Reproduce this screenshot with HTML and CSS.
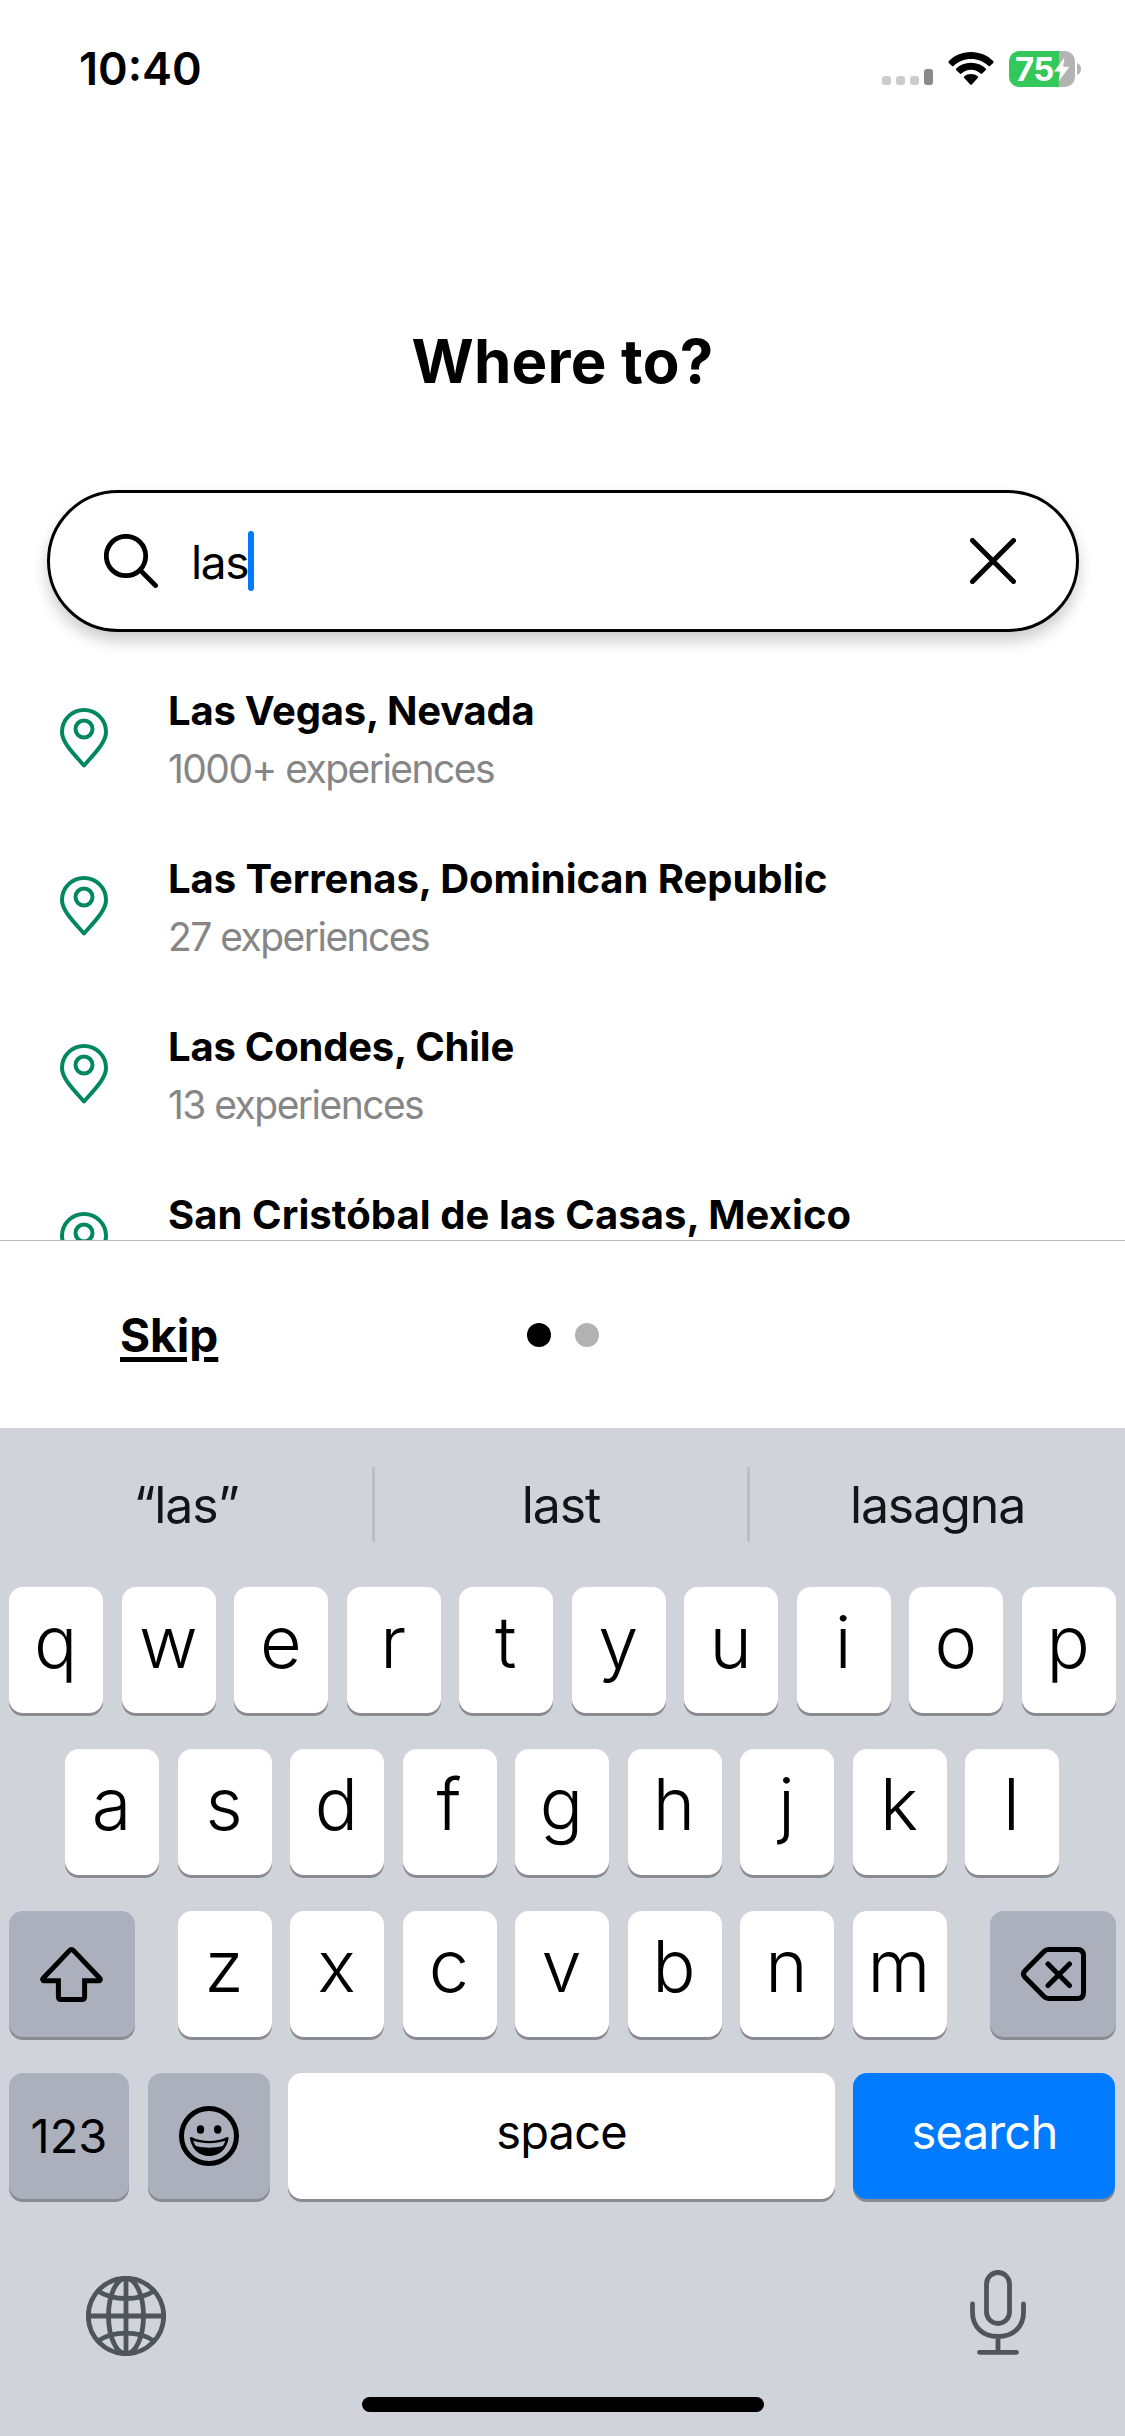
FILE: index.html
```html
<!DOCTYPE html>
<html lang="en">
<head>
<meta charset="utf-8">
<title>Where to?</title>
<link rel="stylesheet" href="styles.css">
</head>
<body>
<svg class="sprite" aria-hidden="true">
  <symbol id="pin" viewBox="0 0 48 60">
    <path d="M24 57.500C15 47 2 35 2 24a22 22 0 0 1 44 0C46 35 33 47 24 57.500Z" fill="none" stroke="currentColor" stroke-width="4" stroke-linejoin="round"/>
    <circle cx="24" cy="21" r="8.500" fill="none" stroke="currentColor" stroke-width="4"/>
  </symbol>
</svg>
<div class="screen">
  <header class="status">
    <span class="clock">10:40</span>
    <div class="indicators">
      <div class="signal"><i></i><i></i><i></i><i class="tall"></i></div>
      <svg class="wifi" viewBox="0 0 46 33"><path d="M23 0C32 0 40 3.600 45.200 9.100Q46 10 45.200 10.900L42 14Q41.200 14.700 40.300 13.800C35.600 9.500 29.700 7 23 7S10.400 9.500 5.700 13.800Q4.800 14.700 4 14L.8 10.900Q0 10 .8 9.100C6 3.600 14 0 23 0Z"/><path d="M23 10.800c6 0 11 2.300 14.700 5.600q.9.900.1 1.700l-3.600 3.500q-.8.700-1.700 0C29.900 19.100 26.700 17.800 23 17.800s-6.900 1.300-9.500 3.800q-.9.700-1.700 0l-3.600-3.500q-.8-.8.100-1.700C12 13.100 17 10.800 23 10.800Z"/><path d="M23 22c2.600 0 4.800.9 6.600 2.300q.9.800.1 1.700L23.800 32.500q-.8.700-1.600 0L16.300 26q-.8-.9.100-1.700C18.200 22.900 20.400 22 23 22Z"/></svg>
      <div class="battery">
        <div class="cell"><span class="level">75</span><svg class="bolt" viewBox="0 0 16 25"><path d="M10.500.500 0 14.500h6.500L4.500 24.500 15.500 9.800H9Z"/></svg></div>
        <svg class="nub" viewBox="0 0 5 12"><path d="M0 0a6.500 6.500 0 0 1 0 12Z"/></svg>
      </div>
    </div>
  </header>
  <main class="content">
    <h1 class="title">Where to?</h1>
    <div class="search">
      <svg class="glass" viewBox="0 0 54 54"><circle cx="22" cy="22" r="19.700"/><path d="M36 36 51.500 51.500"/></svg>
      <span class="query">las</span><i class="caret"></i>
      <svg class="clear" viewBox="0 0 46 46"><path d="M2.500 2.500l41 41M43.500 2.500l-41 41"/></svg>
    </div>
    <ul class="results">
      <li class="result"><svg class="pin"><use href="#pin"/></svg><div class="info"><b class="tight">Las Vegas, Nevada</b><small>1000+ experiences</small></div></li>
      <li class="result"><svg class="pin"><use href="#pin"/></svg><div class="info"><b>Las Terrenas, Dominican Republic</b><small>27 experiences</small></div></li>
      <li class="result"><svg class="pin"><use href="#pin"/></svg><div class="info"><b class="tight">Las Condes, Chile</b><small>13 experiences</small></div></li>
      <li class="result"><svg class="pin"><use href="#pin"/></svg><div class="info"><b class="loose">San Cristóbal de las Casas, Mexico</b></div></li>
    </ul>
  </main>
  <footer class="footer">
    <a class="skip">Skip</a>
    <div class="dots"><i class="on"></i><i></i></div>
  </footer>
  <section class="keyboard">
    <div class="suggestions"><span class="sug">“las”</span><span class="sug">last</span><span class="sug">lasagna</span></div>
    <div class="keys">
      <div class="row"><kbd>q</kbd><kbd>w</kbd><kbd>e</kbd><kbd>r</kbd><kbd>t</kbd><kbd>y</kbd><kbd>u</kbd><kbd>i</kbd><kbd>o</kbd><kbd>p</kbd></div>
      <div class="row middle"><kbd>a</kbd><kbd>s</kbd><kbd>d</kbd><kbd>f</kbd><kbd>g</kbd><kbd>h</kbd><kbd>j</kbd><kbd>k</kbd><kbd>l</kbd></div>
      <div class="row spread">
        <kbd class="mod wide"><svg class="shift" viewBox="0 0 63 55"><path d="M29.700 3.400 3.200 31.200c-1 1-.6 2.600.900 2.600H18.400V49.500c0 2 1 3 3 3H41.600c2 0 3-1 3-3V33.800H58.900c1.500 0 1.900-1.600.900-2.600L33.300 3.400C32.200 2.200 30.800 2.200 29.700 3.400Z"/></svg></kbd>
        <div class="row middle"><kbd>z</kbd><kbd>x</kbd><kbd>c</kbd><kbd>v</kbd><kbd>b</kbd><kbd>n</kbd><kbd>m</kbd></div>
        <kbd class="mod wide"><svg class="delete" viewBox="0 0 65 54"><path d="M27.500 2.500H56.500q6 0 6 6V45.500q0 6-6 6H27.500q-2.500 0-4.500-2L4 30.300Q1 27 4 23.700L23 4.500Q25 2.500 27.500 2.500ZM27 17 48.500 38.500M48.500 17 27 38.500"/></svg></kbd>
      </div>
      <div class="row spread bottom">
        <kbd class="mod num">123</kbd>
        <kbd class="mod emoji"><svg class="face" viewBox="0 0 60 60"><circle cx="30" cy="30" r="27.500" fill="none" stroke="#000" stroke-width="5"/><ellipse cx="21.500" cy="23.500" rx="3.700" ry="4.200"/><ellipse cx="38.700" cy="23.500" rx="3.700" ry="4.200"/><path fill-rule="evenodd" d="M13 31.200C23 36.200 37.500 36.200 47.500 31.200 49 30.600 49.800 31.500 49.500 33 47.500 43.500 40 50 30.200 50S13 43.500 11 33C10.700 31.500 11.500 30.600 13 31.200ZM14.300 34.800C15.300 38 16 39 17 40 25 42.200 35.500 42.200 43.500 40 44.500 39 45.300 38 46.200 34.800 36.500 38 24 38 14.300 34.800Z"/></svg></kbd>
        <kbd class="space">space</kbd>
        <kbd class="go">search</kbd>
      </div>
    </div>
    <div class="tray">
      <svg class="globe" viewBox="0 0 80 80"><circle cx="40" cy="40" r="37.700"/><ellipse cx="40" cy="40" rx="17.500" ry="37.700"/><path d="M40 2V78M2 40H78M12 15C27 25 53 25 68 15M12 65C27 54.500 53 54.500 68 65"/></svg>
      <svg class="mic" viewBox="0 0 56 85"><rect x="16.500" y="2.500" width="23" height="51" rx="11.500"/><path d="M2.500 34V42.500C2.500 57 13 66.500 28 66.500S53.500 57 53.500 42.500V34M28 67V82M9.500 82.300H46.500"/></svg>
    </div>
    <div class="home"></div>
  </section>
</div>
</body>
</html>
```
FILE: styles.css
```css
* { box-sizing: border-box; }
body { margin: 0; font-family: Inter, "Liberation Sans", sans-serif; color: #000; background: #fff; }
.sprite { display: none; }
svg { display: block; flex: none; }
.screen { width: 1125px; height: 2436px; display: flex; flex-direction: column; overflow: hidden; }

.status { height: 138px; padding: 0 43px 0 79px; display: flex; justify-content: space-between; align-items: center; }
.clock { font-size: 45px; font-weight: 570; line-height: 54px; }
.indicators { display: flex; align-items: flex-end; height: 36px; }
.signal { display: flex; align-items: flex-end; gap: 5px; margin: 0 15px 2px 0; }
.signal i { width: 9px; height: 9px; border-radius: 3px; background: #ccc; }
.signal .tall { height: 16px; background: #8a8a8a; }
.wifi { width: 46px; height: 33px; margin: 0 15px 2px 0; }
.battery { display: flex; align-items: center; gap: 2px; }
.cell { width: 66px; height: 36px; border-radius: 10px; display: flex; align-items: center; padding-left: 6px; background: linear-gradient(90deg, #34c759 50px, #b3b3b3 50px); }
.level { color: #fff; font-size: 33px; line-height: 36px; font-weight: 700; letter-spacing: -.5px; }
.bolt { width: 16px; height: 25px; fill: #fff; }
.nub { width: 5px; height: 12px; fill: #b3b3b3; }

.content { height: 1102px; overflow: hidden; display: flex; flex-direction: column; }
.title { margin: 186px 0 0; font-size: 60px; line-height: 74px; font-weight: 700; text-align: center; letter-spacing: .2px; }
.search { margin: 92px 46px 0 47px; height: 142px; flex: none; border: 3px solid #000; border-radius: 71px; display: flex; align-items: center; padding: 0 60px 0 54px; box-shadow: 0 9px 15px rgba(0,0,0,.2); }
.glass { width: 54px; height: 54px; margin-right: 33px; fill: none; stroke: #000; stroke-width: 4.800; stroke-linecap: round; }
.query { font-size: 46px; line-height: 56px; font-weight: 400; letter-spacing: -1.3px; padding-top: 2px; }
.caret { width: 6px; height: 60px; border-radius: 3px; background: #007aff; }
.clear { width: 46px; height: 46px; margin-left: auto; stroke: #000; stroke-width: 5; stroke-linecap: round; }
.results { list-style: none; margin: 54px 0 0; padding: 0; }
.result { height: 168px; display: flex; padding-left: 60px; }
.pin { width: 48px; height: 60px; margin: 22px 60px 0 0; color: #00875f; }
.info { display: flex; flex-direction: column; }
.info b { font-size: 40px; line-height: 50px; font-weight: 700; letter-spacing: -.05px; }
.info .tight { letter-spacing: -.22px; }
.info .loose { letter-spacing: .08px; }
.info small { font-size: 39px; line-height: 50px; font-weight: 400; color: #868686; margin-top: 8px; letter-spacing: -1.55px; }

.footer { height: 188px; flex: none; border-top: 1px solid #bcbcbc; display: grid; grid-template-columns: 1fr auto 1fr; align-items: center; padding: 1px 120px 0; }
.skip { font-size: 46px; font-weight: 700; text-decoration: underline; text-decoration-thickness: 5px; text-underline-offset: 5px; }
.dots { display: flex; gap: 24px; }
.dots i { width: 24px; height: 24px; border-radius: 50%; background: #b2b2b2; }
.dots .on { background: #000; }

.keyboard { flex: 1; background: #d0d3da; display: flex; flex-direction: column; }
.suggestions { height: 159px; display: grid; grid-template-columns: repeat(3, 1fr); align-content: center; padding-bottom: 6px; }
.sug { height: 75px; line-height: 77px; text-align: center; font-size: 50px; font-weight: 400; letter-spacing: -1.1px; color: #121518; }
.sug:not(:last-child) { border-right: 3px solid #bbbec4; }
.keys { display: flex; flex-direction: column; gap: 36px; padding: 0 9px; }
.row { display: flex; justify-content: center; gap: 18.500px; }
.middle { padding-right: 1px; }
.spread { justify-content: space-between; gap: 0; }
kbd { width: 94px; height: 126px; padding: 0 1px 16px 0; border-radius: 14px; background: #fff; box-shadow: 0 3px 0 #898b90; display: flex; align-items: center; justify-content: center; font-family: inherit; font-size: 72px; font-weight: 340; line-height: 110px; }
.mod { background: #abb0bc; padding: 0 1px 0 0; }
.wide { width: 126px; }
.delete { margin-left: 1px; }
.bottom { padding-right: 1px; }
.num { width: 120px; font-size: 47px; font-weight: 400; padding: 0; }
.emoji { width: 122px; margin-left: 1px; padding: 0; }
.space { width: 547px; font-size: 47px; font-weight: 400; padding: 0 0 8px; letter-spacing: -.8px; }
.go { width: 262px; font-size: 47px; font-weight: 400; padding: 0 0 8px 1px; letter-spacing: -.8px; background: #007aff; color: #fff; }
.shift { width: 63px; height: 55px; fill: none; stroke: #000; stroke-width: 5; }
.delete { width: 65px; height: 54px; fill: none; stroke: #000; stroke-width: 5; stroke-linecap: round; }
.face { width: 60px; height: 60px; }
.tray { display: flex; justify-content: space-between; align-items: flex-start; padding: 71px 99px 0 86px; height: 198px; }
.globe, .mic { fill: none; stroke: #50555b; stroke-width: 4.800; stroke-linecap: round; }
.globe { width: 80px; height: 80px; margin-top: 6px; }
.mic { width: 56px; height: 85px; }
.home { width: 402px; height: 15px; border-radius: 8px; background: #000; margin: 0 auto; }
```
